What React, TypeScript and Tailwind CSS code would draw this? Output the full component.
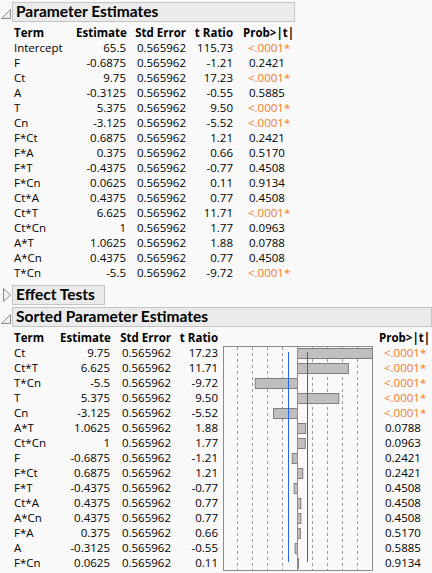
import React from 'react'

type Row = { term: string; est: string; se: string; t: string; p: string; sig: boolean }

const mk = (term: string, est: string, t: string, p: string): Row => ({
  term,
  est,
  se: '0.565962',
  t,
  p,
  sig: p.startsWith('<'),
})

const estimates: Row[] = [
  mk('Intercept', '65.5', '115.73', '<.0001*'),
  mk('F', '-0.6875', '-1.21', '0.2421'),
  mk('Ct', '9.75', '17.23', '<.0001*'),
  mk('A', '-0.3125', '-0.55', '0.5885'),
  mk('T', '5.375', '9.50', '<.0001*'),
  mk('Cn', '-3.125', '-5.52', '<.0001*'),
  mk('F*Ct', '0.6875', '1.21', '0.2421'),
  mk('F*A', '0.375', '0.66', '0.5170'),
  mk('F*T', '-0.4375', '-0.77', '0.4508'),
  mk('F*Cn', '0.0625', '0.11', '0.9134'),
  mk('Ct*A', '0.4375', '0.77', '0.4508'),
  mk('Ct*T', '6.625', '11.71', '<.0001*'),
  mk('Ct*Cn', '1', '1.77', '0.0963'),
  mk('A*T', '1.0625', '1.88', '0.0788'),
  mk('A*Cn', '0.4375', '0.77', '0.4508'),
  mk('T*Cn', '-5.5', '-9.72', '<.0001*'),
]

const sorted: Row[] = [
  mk('Ct', '9.75', '17.23', '<.0001*'),
  mk('Ct*T', '6.625', '11.71', '<.0001*'),
  mk('T*Cn', '-5.5', '-9.72', '<.0001*'),
  mk('T', '5.375', '9.50', '<.0001*'),
  mk('Cn', '-3.125', '-5.52', '<.0001*'),
  mk('A*T', '1.0625', '1.88', '0.0788'),
  mk('Ct*Cn', '1', '1.77', '0.0963'),
  mk('F', '-0.6875', '-1.21', '0.2421'),
  mk('F*Ct', '0.6875', '1.21', '0.2421'),
  mk('F*T', '-0.4375', '-0.77', '0.4508'),
  mk('Ct*A', '0.4375', '0.77', '0.4508'),
  mk('A*Cn', '0.4375', '0.77', '0.4508'),
  mk('F*A', '0.375', '0.66', '0.5170'),
  mk('A', '-0.3125', '-0.55', '0.5885'),
  mk('F*Cn', '0.0625', '0.11', '0.9134'),
]

const OpenIcon = () => (
  <svg width="12" height="20" viewBox="0 0 12 20">
    <polygon points="10.5,7.5 10.5,16.5 1.5,16.5" fill="#f0f0f0" stroke="#8c8c8c" strokeWidth="1" />
  </svg>
)

const ClosedIcon = () => (
  <svg width="12" height="20" viewBox="0 0 12 20">
    <polygon points="3.5,3.5 10.5,10 3.5,16.5" fill="#f0f0f0" stroke="#8c8c8c" strokeWidth="1" />
  </svg>
)

function Title({ text, open, className }: { text: string; open: boolean; className: string }) {
  return (
    <div className="flex items-start">
      <div className="w-[12px] shrink-0">{open ? <OpenIcon /> : <ClosedIcon />}</div>
      <div
        className={`h-[20px] bg-[#ebebeb] border border-[#c4c4c4] pl-[3px] flex items-center text-[15.5px] font-bold text-black leading-none ${className}`}
        style={{ fontFamily: 'Lato, "Open Sans", sans-serif' }}
      >
        {text}
      </div>
    </div>
  )
}

function Prob({ r, pad }: { r: Row; pad: string }) {
  return (
    <div className={`h-[15px] leading-[15px] ${r.sig ? 'text-[#f07b27] pl-0' : 'text-black ' + pad}`}>{r.p}</div>
  )
}

const SCALE = 4.35
const CX = 74

function Chart() {
  const ticks = [14, 29, 44, 59, 89, 104, 119, 134]
  return (
    <svg width="151" height="226" viewBox="0 0 151 226" className="block">
      <rect x="0.5" y="0.5" width="149" height="224" fill="#f9f9f9" stroke="#8c8c8c" />
      {ticks.map((x) => (
        <line key={x} x1={x + 0.5} y1="1" x2={x + 0.5} y2="224" stroke="#9a9a9a" strokeDasharray="3 3" />
      ))}
      {sorted.map((r, i) => {
        const t = parseFloat(r.t)
        const w = Math.abs(t) * SCALE
        const x = t >= 0 ? CX : CX - w
        return (
          <rect
            key={r.term}
            x={x + 0.5}
            y={2.5 + i * 15}
            width={Math.max(w, 1)}
            height={10}
            fill="#bfbfbf"
            stroke="#7f7f7f"
          />
        )
      })}
      <rect x={CX} y="1" width="1" height="223" fill="#8c8c8c" />
      {/* confidence limits */}
      <rect x="65" y="6" width="1" height="210" fill="#2a62f0" />
      <rect x="84" y="6" width="1" height="210" fill="#2a62f0" />
    </svg>
  )
}

export default function App() {
  return (
    <div
      className="w-[432px] h-[573px] overflow-hidden bg-[#f9f9f9] text-[11.5px] text-black pt-[2px]"
      style={{ fontFamily: '"Open Sans", "Noto Sans", sans-serif' }}
    >
      {/* Parameter Estimates */}
      <Title text="Parameter Estimates" open className="w-[283px]" />
      <div className="pl-[14px] pt-[3px] flex">
        <div className="w-[62px]">
          <div className="h-[15px] leading-[15px] font-bold">Term</div>
          {estimates.map((r) => (
            <div key={r.term} className="h-[15px] leading-[15px]">{r.term}</div>
          ))}
        </div>
        <div className="w-[50px] text-right">
          <div className="h-[15px] leading-[15px] font-bold whitespace-nowrap">Estimate</div>
          {estimates.map((r) => (
            <div key={r.term} className="h-[15px] leading-[15px]">{r.est}</div>
          ))}
        </div>
        <div className="w-[60px] text-right">
          <div className="h-[15px] leading-[15px] font-bold whitespace-nowrap">Std Error</div>
          {estimates.map((r) => (
            <div key={r.term} className="h-[15px] leading-[15px]">{r.se}</div>
          ))}
        </div>
        <div className="w-[47px] text-right">
          <div className="h-[15px] leading-[15px] font-bold whitespace-nowrap">t Ratio</div>
          {estimates.map((r) => (
            <div key={r.term} className="h-[15px] leading-[15px]">{r.t}</div>
          ))}
        </div>
        <div className="pl-[15px]">
          <div className="h-[15px] leading-[15px] font-bold whitespace-nowrap -ml-[5px]">Prob&gt;|t|</div>
          {estimates.map((r) => (
            <Prob key={r.term} r={r} pad="pl-[1px]" />
          ))}
        </div>
      </div>

      {/* Effect Tests */}
      <div className="mt-[5px]">
        <Title text="Effect Tests" open={false} className="w-[93px]" />
      </div>

      {/* Sorted Parameter Estimates */}
      <div className="mt-[2px]">
        <Title text="Sorted Parameter Estimates" open className="w-[420px]" />
      </div>
      <div className="pl-[14px] pt-[3px] flex">
        <div className="w-[46px]">
          <div className="h-[15px] leading-[15px] font-bold">Term</div>
          {sorted.map((r) => (
            <div key={r.term} className="h-[15px] leading-[15px]">{r.term}</div>
          ))}
        </div>
        <div className="w-[50px] text-right">
          <div className="h-[15px] leading-[15px] font-bold whitespace-nowrap">Estimate</div>
          {sorted.map((r) => (
            <div key={r.term} className="h-[15px] leading-[15px]">{r.est}</div>
          ))}
        </div>
        <div className="w-[61px] text-right">
          <div className="h-[15px] leading-[15px] font-bold whitespace-nowrap">Std Error</div>
          {sorted.map((r) => (
            <div key={r.term} className="h-[15px] leading-[15px]">{r.se}</div>
          ))}
        </div>
        <div className="w-[47px] text-right">
          <div className="h-[15px] leading-[15px] font-bold whitespace-nowrap">t Ratio</div>
          {sorted.map((r) => (
            <div key={r.term} className="h-[15px] leading-[15px]">{r.t}</div>
          ))}
        </div>
        <div className="pl-[5px] pt-[16px]">
          <Chart />
        </div>
        <div className="pl-[10px]">
          <div className="h-[15px] leading-[15px] font-bold whitespace-nowrap -ml-[5px]">Prob&gt;|t|</div>
          {sorted.map((r) => (
            <Prob key={r.term} r={r} pad="pl-[1px]" />
          ))}
        </div>
      </div>
    </div>
  )
}
